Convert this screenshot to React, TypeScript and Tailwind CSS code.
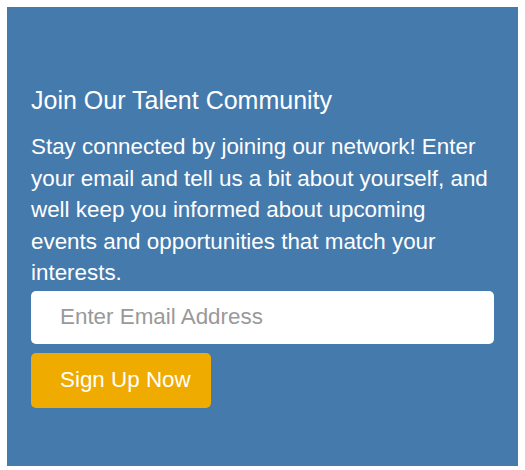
export default function App() {
  return (
    <div className="min-h-[470px] bg-white pt-[7px] font-['Liberation_Sans',Arial,sans-serif]">
      <div className="mx-[7px] bg-[#457aad] px-6 pt-[79px] pb-[58px] text-white">
        <h2 className="mb-[16px] text-[25px] font-normal leading-[29px]">Join Our Talent Community</h2>
        <p className="text-[22.4px] leading-[31.5px]">
          Stay connected by joining our network! Enter your email and tell us a bit about yourself, and well keep
          you informed about upcoming events and opportunities that match your interests.
        </p>
        <input
          type="email"
          placeholder="Enter Email Address"
          className="mt-[2px] block h-[53px] w-full rounded-[5px] border-0 bg-white pl-[29px] text-[22.4px] text-gray-800 outline-none placeholder:text-[#999999]"
        />
        <button className="mt-[9px] block h-[55px] w-[180px] rounded-[5px] bg-[#f0ab00] pl-[29px] text-left text-[22.4px] text-white">
          Sign Up Now
        </button>
      </div>
    </div>
  );
}
